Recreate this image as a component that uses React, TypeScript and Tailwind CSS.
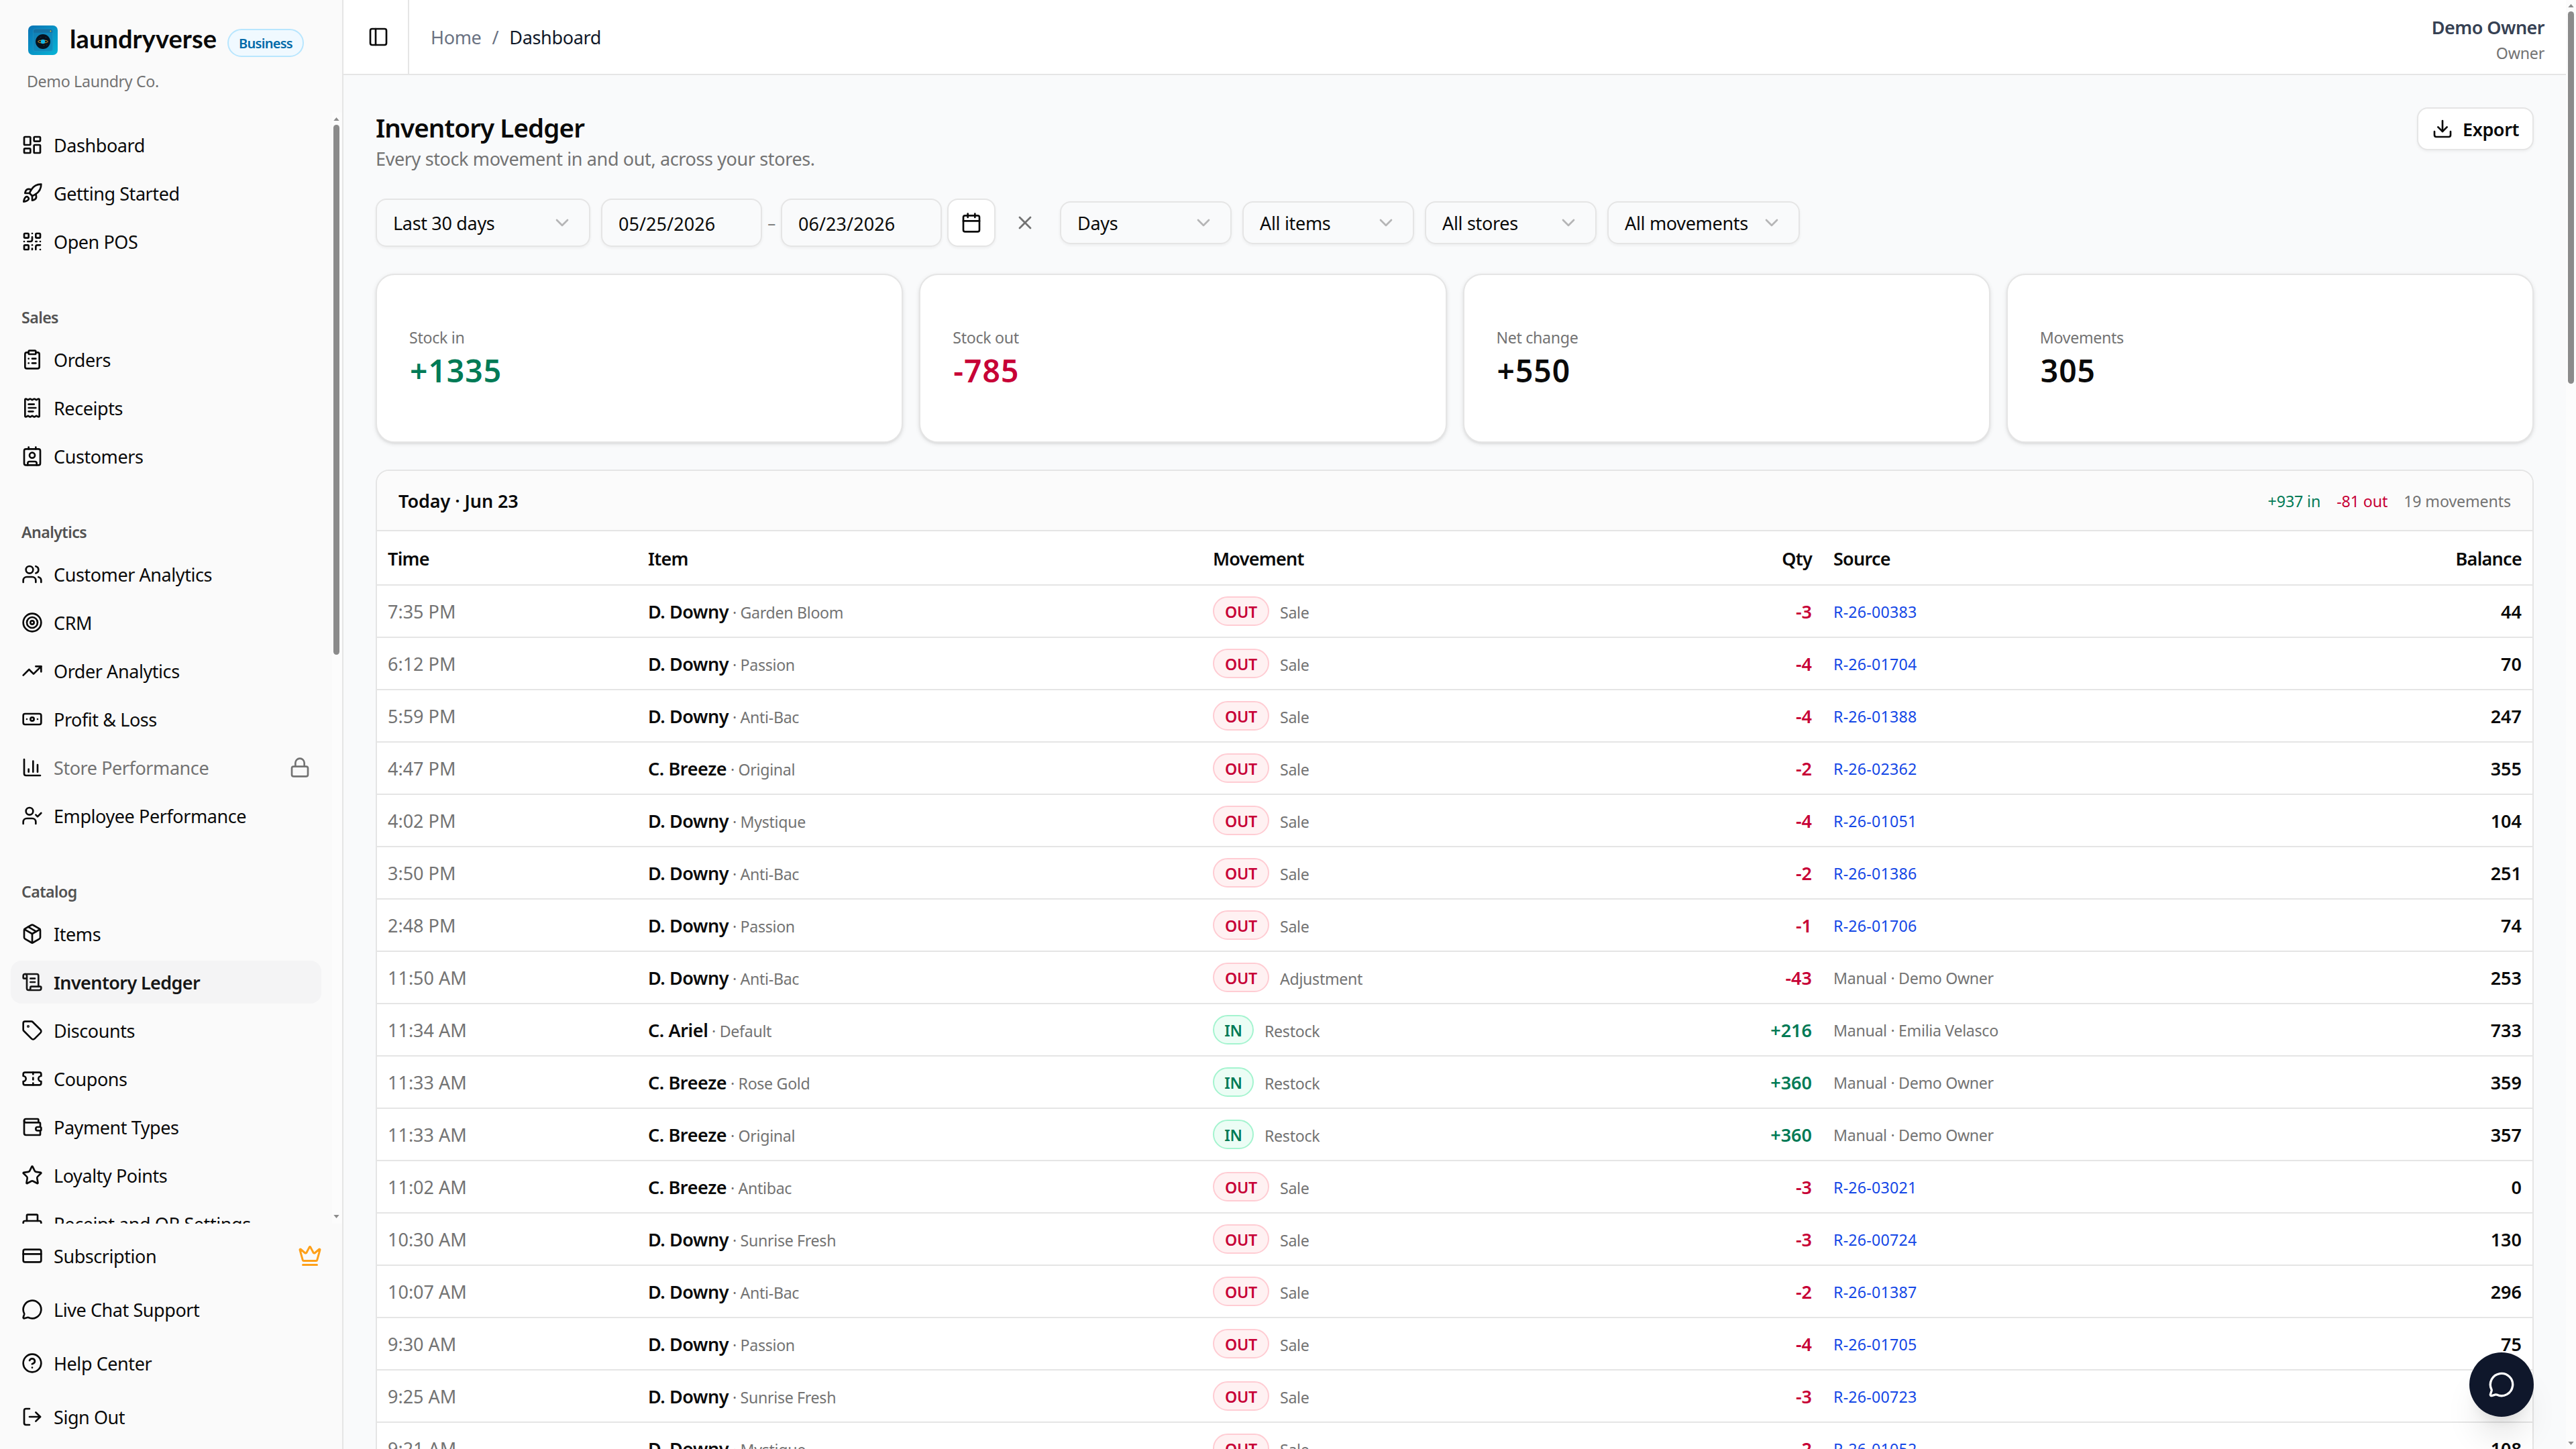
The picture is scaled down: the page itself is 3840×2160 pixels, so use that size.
import {
  Banknote,
  Calendar,
  ChartColumn,
  ChevronDown,
  CircleQuestionMark,
  ClipboardList,
  Contact,
  CreditCard,
  Crown,
  Download,
  LayoutDashboard,
  Lock,
  LogOut,
  LucideIcon,
  MessageCircle,
  Package,
  PanelLeft,
  Printer,
  QrCode,
  ReceiptText,
  Rocket,
  ScrollText,
  Star,
  Tag,
  Target,
  Ticket,
  TrendingUp,
  UserCheck,
  Users,
  Wallet,
  X,
} from "lucide-react";

type NavItem = { label: string; icon: LucideIcon; active?: boolean; locked?: boolean };

const navGroups: { title?: string; items: NavItem[] }[] = [
  {
    items: [
      { label: "Dashboard", icon: LayoutDashboard },
      { label: "Getting Started", icon: Rocket },
      { label: "Open POS", icon: QrCode },
    ],
  },
  {
    title: "Sales",
    items: [
      { label: "Orders", icon: ClipboardList },
      { label: "Receipts", icon: ReceiptText },
      { label: "Customers", icon: Contact },
    ],
  },
  {
    title: "Analytics",
    items: [
      { label: "Customer Analytics", icon: Users },
      { label: "CRM", icon: Target },
      { label: "Order Analytics", icon: TrendingUp },
      { label: "Profit & Loss", icon: Banknote },
      { label: "Store Performance", icon: ChartColumn, locked: true },
      { label: "Employee Performance", icon: UserCheck },
    ],
  },
  {
    title: "Catalog",
    items: [
      { label: "Items", icon: Package },
      { label: "Inventory Ledger", icon: ScrollText, active: true },
      { label: "Discounts", icon: Tag },
      { label: "Coupons", icon: Ticket },
      { label: "Payment Types", icon: Wallet },
      { label: "Loyalty Points", icon: Star },
      { label: "Receipt and QR Settings", icon: Printer },
    ],
  },
];

const footerItems: NavItem[] = [
  { label: "Subscription", icon: CreditCard },
  { label: "Live Chat Support", icon: MessageCircle },
  { label: "Help Center", icon: CircleQuestionMark },
  { label: "Sign Out", icon: LogOut },
];

const stats = [
  { label: "Stock in", value: "+1335", color: "text-[#007a55]" },
  { label: "Stock out", value: "-785", color: "text-[#c70036]" },
  { label: "Net change", value: "+550", color: "text-[#0a0a0a]" },
  { label: "Movements", value: "305", color: "text-[#0a0a0a]" },
];

// time, item, variant, reason, qty, source, balance
const movements: [string, string, string, string, number, string, number][] = [
  ["7:35 PM", "D. Downy", "Garden Bloom", "Sale", -3, "R-26-00383", 44],
  ["6:12 PM", "D. Downy", "Passion", "Sale", -4, "R-26-01704", 70],
  ["5:59 PM", "D. Downy", "Anti-Bac", "Sale", -4, "R-26-01388", 247],
  ["4:47 PM", "C. Breeze", "Original", "Sale", -2, "R-26-02362", 355],
  ["4:02 PM", "D. Downy", "Mystique", "Sale", -4, "R-26-01051", 104],
  ["3:50 PM", "D. Downy", "Anti-Bac", "Sale", -2, "R-26-01386", 251],
  ["2:48 PM", "D. Downy", "Passion", "Sale", -1, "R-26-01706", 74],
  ["11:50 AM", "D. Downy", "Anti-Bac", "Adjustment", -43, "Manual · Demo Owner", 253],
  ["11:34 AM", "C. Ariel", "Default", "Restock", 216, "Manual · Emilia Velasco", 733],
  ["11:33 AM", "C. Breeze", "Rose Gold", "Restock", 360, "Manual · Demo Owner", 359],
  ["11:33 AM", "C. Breeze", "Original", "Restock", 360, "Manual · Demo Owner", 357],
  ["11:02 AM", "C. Breeze", "Antibac", "Sale", -3, "R-26-03021", 0],
  ["10:30 AM", "D. Downy", "Sunrise Fresh", "Sale", -3, "R-26-00724", 130],
  ["10:07 AM", "D. Downy", "Anti-Bac", "Sale", -2, "R-26-01387", 296],
  ["9:30 AM", "D. Downy", "Passion", "Sale", -4, "R-26-01705", 75],
  ["9:25 AM", "D. Downy", "Sunrise Fresh", "Sale", -3, "R-26-00723", 74],
  ["9:21 AM", "D. Downy", "Mystique", "Sale", -2, "R-26-01052", 108],
];

const rowGrid = "grid grid-cols-[194px_421px_268px_194.500px_1fr_260px] items-center border-b border-[#e5e5e5]";

const Logo = () => (
  <svg viewBox="0 0 22 22" className="size-[22px] shrink-0">
    <defs>
      <linearGradient id="logo-bg" x1="0" y1="0" x2="1" y2="1">
        <stop offset="0" stopColor="#0a72b4" />
        <stop offset="1" stopColor="#06b4d6" />
      </linearGradient>
    </defs>
    <rect width="22" height="22" rx="3.5" fill="url(#logo-bg)" />
    <rect x="3.7" y="2.5" width="14.7" height="16.8" rx="1.8" fill="#1580b4" fillOpacity="0.6" stroke="#3b9fcd" strokeOpacity="0.6" strokeWidth="0.3" />
    <path d="M4 5.4V4.2a1.5 1.5 0 0 1 1.5-1.5h11.2a1.5 1.5 0 0 1 1.5 1.5v1.2z" fill="#17699a" fillOpacity="0.7" />
    <circle cx="16.7" cy="4.2" r="0.45" fill="#fbbf24" />
    <circle cx="11" cy="12" r="5.5" fill="#06121f" />
    <ellipse cx="11" cy="12" rx="3.7" ry="1" fill="none" stroke="#d39a2c" strokeWidth="0.5" />
    <circle cx="11" cy="12" r="1.6" fill="#12b5e5" />
    <circle cx="11.7" cy="14.9" r="0.2" fill="#fbbf24" />
    <path d="M9.3 8.7h.3M13.2 8.9h.3M8 10h.2M13.8 14.6h.2" stroke="#7cc4e8" strokeWidth="0.25" />
  </svg>
);

const NavRow = ({ item }: { item: NavItem }) => {
  const Icon = item.icon;
  return (
    <a
      className={`flex h-8 shrink-0 items-center gap-2 rounded-lg px-2 ${
        item.active ? "bg-[#f4f4f5] font-semibold tracking-[-0.023em] text-[#171717]" : "tracking-[-0.016em]"
      }`}
    >
      <Icon className="size-4 shrink-0" />
      <span className={`pt-px whitespace-nowrap ${item.locked ? "text-[#737373]" : ""}`}>{item.label}</span>
      {item.locked && <Lock className="ml-auto size-4 text-[#737373]" />}
      {item.label === "Subscription" && <Crown className="mr-[-1px] ml-auto size-[18px] text-[#fea019]" />}
    </a>
  );
};

const Triangle = ({ down }: { down?: boolean }) => (
  <svg viewBox="0 0 5 3" className="h-[2.5px] w-[4.5px]">
    <path d={down ? "M0 0h5L2.5 3z" : "M0 3h5L2.5 0z"} fill="#8b8b8b" />
  </svg>
);

const Sidebar = () => (
  <aside className="flex w-64 shrink-0 flex-col border-r border-[#e5e5e5] bg-[#fafafa]">
    <div className="h-[84px] shrink-0 px-5 pt-[19px]">
      <div className="flex h-[22px] items-center pl-px">
        <Logo />
        <span className="w-[118px] shrink-0 pb-[3px] pl-[9px] font-['Lato'] text-[19px] font-bold tracking-[0.002em]">laundryverse</span>
        <span className="mt-1 ml-[8.5px] flex h-[21px] w-[57px] shrink-0 items-center justify-center rounded-full border border-[#b8e6fe] bg-[#f0f9ff] pt-px text-[10px] font-semibold tracking-[-0.035em] text-[#0069a8]">
          Business
        </span>
      </div>
      <p className="mt-[11.5px] text-[11.6px] leading-4 text-[#737373]">Demo Laundry Co.</p>
    </div>
    <div className="flex min-h-0 flex-1">
      <nav className="flex min-w-0 flex-1 flex-col gap-4 overflow-hidden">
        {navGroups.map((group, i) => (
          <div key={i} className={`flex flex-col px-2 pb-2 ${i === 0 ? "pt-2" : ""}`}>
            {group.title && (
              <div className="flex h-8 shrink-0 items-center px-2 pt-px text-[11.6px] font-semibold tracking-[-0.025em] text-[#525252]">
                {group.title}
              </div>
            )}
            <div className="flex flex-col gap-1">
              {group.items.map((item) => (
                <NavRow key={item.label} item={item} />
              ))}
            </div>
          </div>
        ))}
      </nav>
      <div className="flex w-[7.5px] flex-col items-center bg-[#fcfcfc] pt-[3.5px] pr-px pb-[4px]">
        <Triangle />
        <div className="mt-[3px] h-[395px] w-[4.5px] rounded-full bg-[#8b8b8b]" />
        <div className="mt-auto flex">
          <Triangle down />
        </div>
      </div>
    </div>
    <div className="flex flex-col gap-2 p-2">
      {footerItems.map((item) => (
        <NavRow key={item.label} item={item} />
      ))}
    </div>
  </aside>
);

const Topbar = () => (
  <header className="flex h-14 shrink-0 items-center border-b border-[#e5e5e5] bg-white pr-4">
    <div className="flex h-full w-[49px] items-center justify-center border-r border-[#e5e5e5] pl-[4px]">
      <PanelLeft className="size-4" />
    </div>
    <div className="flex flex-1 gap-2 pt-px pl-4 text-[#6a7282]">
      <span>Home</span>
      <span>/</span>
      <span className="text-[#101828]">Dashboard</span>
    </div>
    <div className="pt-[3px] text-right">
      <div className="leading-5 font-semibold tracking-[-0.02em] text-[#364153]">Demo Owner</div>
      <div className="pt-px text-[11.6px] leading-4 tracking-[-0.01em] text-[#737373]">Owner</div>
    </div>
  </header>
);

const Select = ({ label, className }: { label: string; className: string }) => (
  <button
    className={`flex items-center justify-between gap-2 rounded-lg border border-[#e5e5e5] px-3 whitespace-nowrap shadow-xs ${className}`}
  >
    <span className="pt-px">{label}</span>
    <ChevronDown className="size-4 text-[#737373] opacity-50" />
  </button>
);

const DateInput = ({ value }: { value: string }) => (
  <div className="flex h-9 w-[120px] items-center rounded-lg border border-[#e5e5e5] px-3 pt-[1.5px] tracking-[0.002em] shadow-xs">
    {value}
  </div>
);

const Filters = () => (
  <div className="mt-5 flex items-center gap-2">
    <Select label="Last 30 days" className="h-9 w-40" />
    <div className="flex items-center gap-1">
      <DateInput value="05/25/2026" />
      <span className="w-1.5 text-center text-xs text-[#737373]">–</span>
      <DateInput value="06/23/2026" />
      <button className="flex size-9 items-center justify-center rounded-lg border border-[#e5e5e5] bg-white shadow-xs">
        <Calendar className="size-4" />
      </button>
      <button className="flex size-9 items-center justify-center text-[#737373]">
        <X className="size-4" />
      </button>
    </div>
    <Select label="Days" className="h-8 w-32" />
    <Select label="All items" className="h-8 w-32" />
    <Select label="All stores" className="h-8 w-32" />
    <Select label="All movements" className="h-8 w-[143.5px]" />
  </div>
);

const Ledger = () => (
  <section className="mt-5 shrink-0 rounded-t-[10px] border border-[#e5e5e5] bg-white">
    <div className="flex h-[45px] items-center justify-between rounded-t-[9px] border-b border-[#e5e5e5] bg-[#fbfbfb] px-4">
      <h2 className="pt-px font-semibold tracking-[-0.003em]">Today · Jun 23</h2>
      <div className="flex gap-3 pt-px text-[11.6px] tracking-[-0.005em]">
        <span className="text-[#007a55]">+937 in</span>
        <span className="text-[#c70036]">-81 out</span>
        <span className="text-[#737373]">19 movements</span>
      </div>
    </div>
    <div className={`${rowGrid} h-[40.5px] pt-px font-semibold tracking-[-0.027em]`}>
      <div className="px-2">Time</div>
      <div className="px-2">Item</div>
      <div className="px-2">Movement</div>
      <div className="px-2 text-right">Qty</div>
      <div className="px-2">Source</div>
      <div className="px-2 text-right">Balance</div>
    </div>
    {movements.map(([time, item, variant, reason, qty, source, balance], i) => (
      <div key={i} className={`${rowGrid} h-[39px]`}>
        <div className="px-2 pt-px tracking-normal text-[#737373]">{time}</div>
        <div className="px-2 pt-px">
          <span className="font-semibold tracking-[-0.015em]">{item}</span>
          <span className="text-[11.6px] text-[#737373]"> · {variant}</span>
        </div>
        <div className="flex items-center gap-2 px-2">
          {qty < 0 ? (
            <span className="flex h-[22px] w-[42px] items-center justify-center rounded-full border border-[#ffccd3] bg-[#fff1f2] pt-px text-[11.6px] font-semibold tracking-[-0.01em] text-[#c70036]">
              OUT
            </span>
          ) : (
            <span className="flex h-[22px] w-[30.5px] items-center justify-center rounded-full border border-[#a4f4cf] bg-[#ecfdf5] pt-px text-[11.6px] font-semibold tracking-[-0.01em] text-[#007a55]">
              IN
            </span>
          )}
          <span className="pt-0.5 text-[11.6px] text-[#737373]">{reason}</span>
        </div>
        <div className={`px-2 pt-px text-right font-semibold tracking-normal ${qty < 0 ? "text-[#c70036]" : "text-[#007a55]"}`}>
          {qty > 0 ? `+${qty}` : qty}
        </div>
        <div className={`px-2 pt-px text-[11.6px] ${source.startsWith("R-") ? "tracking-[0.01em] text-[#1447e6]" : "text-[#737373]"}`}>
          {source}
        </div>
        <div className="px-2 pt-px text-right font-semibold tracking-normal">{balance}</div>
      </div>
    ))}
  </section>
);

export default function App() {
  return (
    <div className="relative flex h-[1080px] w-[1920px] overflow-hidden bg-[#f9fafb] font-['Noto_Sans',sans-serif] text-[13.5px] leading-5 tracking-[-0.012em] text-[#0a0a0a] [zoom:2]">
      <Sidebar />
      <div className="flex min-w-0 flex-1 flex-col">
        <Topbar />
        <main className="flex min-h-0 flex-1 flex-col overflow-hidden px-6 pt-6">
          <div className="flex items-start justify-between">
            <div>
              <h1 className="pt-px text-[19.25px] leading-7 font-semibold tracking-[-0.023em]">Inventory Ledger</h1>
              <p className="leading-[19px] tracking-[-0.014em] text-[#737373]">Every stock movement in and out, across your stores.</p>
            </div>
            <button className="flex h-8 w-[87px] items-center gap-[7px] rounded-lg border border-[#e5e5e5] bg-white px-2.5 font-semibold tracking-[-0.015em] shadow-xs">
              <Download className="size-4" />
              <span className="pt-px">Export</span>
            </button>
          </div>
          <Filters />
          <div className="mt-5 grid shrink-0 grid-cols-4 gap-3">
            {stats.map((s) => (
              <div key={s.label} className="h-[126px] rounded-[14px] border border-[#e5e5e5] bg-white px-6 pt-[38.5px] shadow-sm">
                <div className="text-[11.6px] leading-4 text-[#737373]">{s.label}</div>
                <div className={`pt-px pl-[0.5px] text-[23.1px] leading-8 font-semibold tracking-[0.022em] ${s.color}`}>{s.value}</div>
              </div>
            ))}
          </div>
          <Ledger />
        </main>
      </div>
      <div className="flex w-[7.5px] shrink-0 flex-col items-center bg-[#fcfcfc] pt-[3px] pb-[3px]">
        <Triangle />
        <div className="mt-[3px] h-[277.5px] w-[4.5px] rounded-full bg-[#8b8b8b]" />
        <div className="mt-auto flex">
          <Triangle down />
        </div>
      </div>
      <button className="absolute right-[31.5px] bottom-6 flex size-12 items-center justify-center rounded-full bg-[#0f172b] text-white shadow-xl">
        <MessageCircle className="size-5" />
      </button>
    </div>
  );
}
